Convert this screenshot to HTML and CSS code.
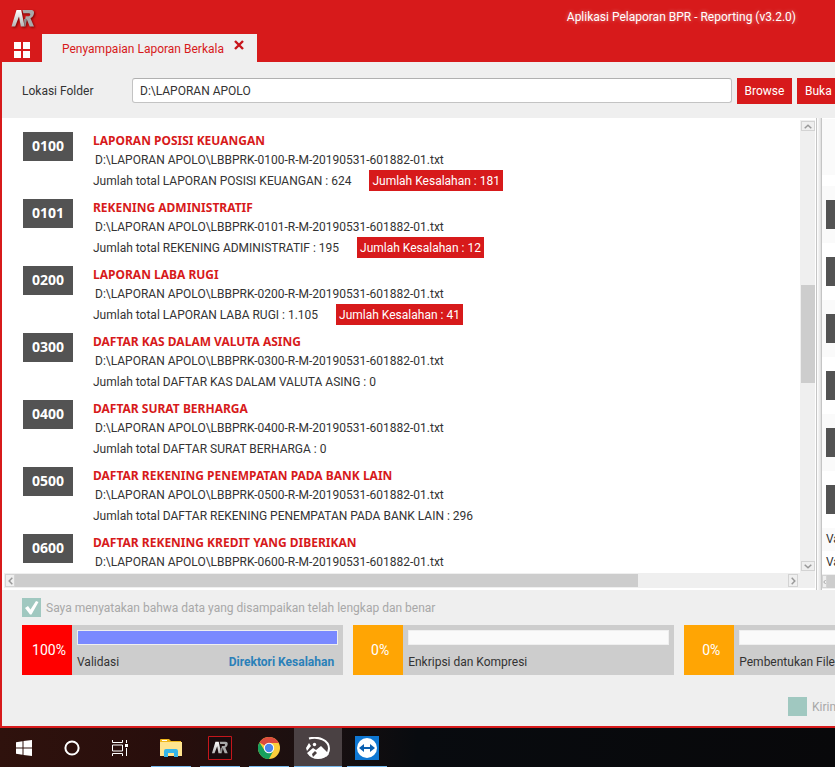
FILE: index.html
```html
<!DOCTYPE html>
<html lang="id">
<head>
<meta charset="utf-8">
<meta name="viewport" content="width=device-width, initial-scale=1">
<title>Aplikasi Pelaporan BPR - Reporting (v3.2.0)</title>
<link rel="stylesheet" href="styles.css">
</head>
<body>
<svg width="0" height="0" class="defs" aria-hidden="true">
  <defs>
    <linearGradient id="metal" x1="0" y1="0" x2="0" y2="1"><stop offset="0" stop-color="#fff"/><stop offset="1" stop-color="#b5b5b5"/></linearGradient>
    <symbol id="ar" viewBox="0 0 24 20">
      <path d="M.5 17.500 5.500 1h4.700l3.400 16.500H9.800L8 7.500 4.200 17.500z" fill="url(#metal)"/>
      <path d="M11.500 1h8c3.600 0 4 2 3.200 4.600-.5 1.900-1.600 3-3.200 3.600l3.500 8.300h-4.300L15.700 10h-1.500l.5-2.700h3c1.800 0 2.200-3 .4-3h-5.800z" fill="#a9a9a9"/>
      <path d="M13 10h3l-1.500 7.500h-1z" fill="#8b8b8b"/>
    </symbol>
    <symbol id="up" viewBox="0 0 8 5"><path d="M.7 4.300 4 1.200l3.300 3.100" fill="none" stroke="#999" stroke-width="1.500"/></symbol>
    <symbol id="down" viewBox="0 0 8 5"><path d="M.7.7 4 3.800 7.300.7" fill="none" stroke="#999" stroke-width="1.500"/></symbol>
    <symbol id="left" viewBox="0 0 5 8"><path d="M4.300.7 1.200 4l3.100 3.300" fill="none" stroke="#999" stroke-width="1.500"/></symbol>
    <symbol id="right" viewBox="0 0 5 8"><path d="M.7.7 3.800 4 .7 7.300" fill="none" stroke="#999" stroke-width="1.500"/></symbol>
  </defs>
</svg>
<div class="app">
  <header class="titlebar">
    <svg class="logo" width="24" height="20" aria-hidden="true"><use href="#ar"/></svg>
    <h1>Aplikasi Pelaporan BPR - Reporting (v3.2.0)</h1>
  </header>
  <nav class="tabs">
    <button class="menu" aria-label="Menu"><svg width="16" height="16" viewBox="0 0 16 16"><path d="M0 0h7v7H0zM9 0h7v7H9zM0 9h7v7H0zM9 9h7v7H9z" fill="#fff"/></svg></button>
    <div class="tab">
      <a href="#berkala">Penyampaian Laporan Berkala</a>
      <button class="close" aria-label="Tutup"><svg width="12" height="12" viewBox="0 0 12 12"><path d="m2 2 8 8M10 2l-8 8" stroke="#c8141a" stroke-width="2.400"/></svg></button>
    </div>
  </nav>
  <div class="folder">
    <label for="folder">Lokasi Folder</label>
    <input id="folder" type="text" value="D:\LAPORAN APOLO">
    <button class="action">Browse</button>
    <button class="action cut">Buka</button>
  </div>
  <main class="split" id="berkala">
    <section class="reports">
      <ul class="list">
        <li><b class="code">0100</b><div><h2>LAPORAN POSISI KEUANGAN</h2><p class="path">D:\LAPORAN APOLO\LBBPRK-0100-R-M-20190531-601882-01.txt</p><p class="total">Jumlah total LAPORAN POSISI KEUANGAN : 624 <span class="errors">Jumlah Kesalahan : 181</span></p></div></li>
        <li><b class="code">0101</b><div><h2>REKENING ADMINISTRATIF</h2><p class="path">D:\LAPORAN APOLO\LBBPRK-0101-R-M-20190531-601882-01.txt</p><p class="total">Jumlah total REKENING ADMINISTRATIF : 195 <span class="errors">Jumlah Kesalahan : 12</span></p></div></li>
        <li><b class="code">0200</b><div><h2>LAPORAN LABA RUGI</h2><p class="path">D:\LAPORAN APOLO\LBBPRK-0200-R-M-20190531-601882-01.txt</p><p class="total">Jumlah total LAPORAN LABA RUGI : 1.105 <span class="errors">Jumlah Kesalahan : 41</span></p></div></li>
        <li><b class="code">0300</b><div><h2>DAFTAR KAS DALAM VALUTA ASING</h2><p class="path">D:\LAPORAN APOLO\LBBPRK-0300-R-M-20190531-601882-01.txt</p><p class="total">Jumlah total DAFTAR KAS DALAM VALUTA ASING : 0</p></div></li>
        <li><b class="code">0400</b><div><h2>DAFTAR SURAT BERHARGA</h2><p class="path">D:\LAPORAN APOLO\LBBPRK-0400-R-M-20190531-601882-01.txt</p><p class="total">Jumlah total DAFTAR SURAT BERHARGA : 0</p></div></li>
        <li><b class="code">0500</b><div><h2>DAFTAR REKENING PENEMPATAN PADA BANK LAIN</h2><p class="path">D:\LAPORAN APOLO\LBBPRK-0500-R-M-20190531-601882-01.txt</p><p class="total">Jumlah total DAFTAR REKENING PENEMPATAN PADA BANK LAIN : 296</p></div></li>
        <li><b class="code">0600</b><div><h2>DAFTAR REKENING KREDIT YANG DIBERIKAN</h2><p class="path">D:\LAPORAN APOLO\LBBPRK-0600-R-M-20190531-601882-01.txt</p></div></li>
      </ul>
      <div class="vbar">
        <button aria-label="Gulir ke atas"><svg width="8" height="5"><use href="#up"/></svg></button>
        <div class="track"><div class="thumb"></div></div>
        <button aria-label="Gulir ke bawah"><svg width="8" height="5"><use href="#down"/></svg></button>
      </div>
      <div class="hbar">
        <button aria-label="Gulir ke kiri"><svg width="5" height="8"><use href="#left"/></svg></button>
        <div class="track"><div class="thumb"></div></div>
        <button aria-label="Gulir ke kanan"><svg width="5" height="8"><use href="#right"/></svg></button>
      </div>
      <div class="corner"></div>
    </section>
    <div class="divider"></div>
    <aside class="side">
      <div class="blank"></div>
      <ul>
        <li><i></i></li><li><i></i></li><li><i></i></li><li><i></i></li><li><i></i></li><li><i></i></li>
      </ul>
      <p class="shade">Va</p>
      <p>Va</p>
      <div class="hbar"><button aria-label="Gulir panel ke kiri"><svg width="5" height="8"><use href="#left"/></svg></button><div class="thumb"></div></div>
    </aside>
  </main>
  <footer class="process">
    <div class="check">
      <input id="agree" type="checkbox" checked disabled>
      <svg class="tick" width="19" height="19" viewBox="0 0 19 19" aria-hidden="true"><path d="m3 10 3-2 2.500 3.500L14 3l2.500 1-7 12.500H8z" fill="#fff"/></svg>
      <label for="agree">Saya menyatakan bahwa data yang disampaikan telah lengkap dan benar</label>
    </div>
    <div class="jobs">
      <section class="job failed"><span class="percent">100%</span><div class="detail"><div class="bar"><div style="width:100%"></div></div><p>Validasi <a href="#kesalahan">Direktori Kesalahan</a></p></div></section>
      <section class="job"><span class="percent">0%</span><div class="detail"><div class="bar"><div style="width:0%"></div></div><p>Enkripsi dan Kompresi</p></div></section>
      <section class="job"><span class="percent">0%</span><div class="detail"><div class="bar"><div style="width:0%"></div></div><p>Pembentukan File</p></div></section>
    </div>
    <div class="check send">
      <input id="send" type="checkbox" disabled>
      <label for="send">Kirim</label>
    </div>
  </footer>
</div>
<nav class="taskbar">
  <button aria-label="Start"><svg width="16" height="16" viewBox="0 0 16 16"><path d="M0 2.200 6.500 1.300v6.200H0zM7.500 1.100 16 0v7.500H7.500zM0 8.500h6.500v6.200L0 13.800zM7.500 8.500H16V16l-8.500-1.100z" fill="#fff"/></svg></button>
  <button aria-label="Cortana"><svg width="16" height="16" viewBox="0 0 16 16"><circle cx="8" cy="8" r="6.600" fill="none" stroke="#fff" stroke-width="2"/></svg></button>
  <button aria-label="Task View"><svg width="16" height="16" viewBox="0 0 16 16"><path d="M.5 0v2.500h10V0M.5 5h10v6H.5zM.5 16v-2.500h10V16M14.500 0v3M14.500 8v8" fill="none" stroke="#fff"/><path d="M13 4h3v3h-3z" fill="#fff"/></svg></button>
  <button class="open" aria-label="File Explorer"><svg width="22" height="18" viewBox="0 0 22 18"><path d="M0 1q0-1 1-1h8l2 2h10v4H0z" fill="#f0b71c"/><path d="M2 1h5v1H2z" fill="#fff"/><path d="M0 3h22v14H0z" fill="#ffe48f"/><path d="M4 18v-6q0-2 2-2h10q2 0 2 2v6h-4v-4H8v4z" fill="#35b5e9"/></svg></button>
  <button class="open" aria-label="Reporting"><svg width="24" height="24" viewBox="0 0 24 24"><path d="M.5.5h23v23H.5z" fill="#190c0e" stroke="#c5161b"/><use href="#ar" x="3" y="5" width="18" height="14"/></svg></button>
  <button class="open" aria-label="Chrome"><svg width="22" height="22" viewBox="0 0 22 22"><circle cx="11" cy="11" r="11" fill="#fbcf3c"/><path d="M11 11 1.470 5.500A11 11 0 0 1 20.530 5.500L20.800 6H11z" fill="#dc4b3e"/><path d="M1.470 5.500A11 11 0 0 0 11 22l4.500-8.500L11 11l-4.300 2.500z" fill="#17a05d"/><circle cx="11" cy="11" r="5.200" fill="#fff"/><circle cx="11" cy="11" r="4.200" fill="#4a86ee"/></svg></button>
  <button class="open active" aria-label="Foto"><svg width="24" height="22" viewBox="0 0 24 22"><path d="M3 1.500C12-1 23 3 23 11.500c0 3-1.500 5.500-3.500 7.500" fill="none" stroke="#fff" stroke-width="2"/><path d="M0 11 3 6l2 3-4 5zM1 16l6-5 3 2 5-4 8 8q-4 5-11 5T1 16z" fill="#fff"/><path d="m6 17 3-3 2 2-4 4z" fill="#4a4040"/><circle cx="8.500" cy="7.500" r="1.700" fill="#fff"/></svg></button>
  <button class="open" aria-label="TeamViewer"><svg width="24" height="24" viewBox="0 0 24 24"><path d="M0 0h24v24H0z" fill="#0e77d2"/><circle cx="12" cy="12" r="10" fill="#fff"/><path d="m4 12 5-4v3h6V8l5 4-5 4v-3H9v3z" fill="#0a5fb0"/></svg></button>
</nav>
</body>
</html>
```
FILE: styles.css
```css
* { box-sizing: border-box; }
body {
  margin: 0;
  min-height: 100vh;
  display: flex;
  flex-direction: column;
  overflow: hidden;
  font: 12px/20px "Segoe UI", Roboto, "Open Sans", sans-serif;
  color: #333;
  background: #efefef;
}
h1, h2, p, ul { margin: 0; padding: 0; font-size: 12px; }
ul { list-style: none; }
button { margin: 0; padding: 0; border: 0; background: none; font: inherit; }
svg { display: block; }
a { text-decoration: none; }
.defs { position: absolute; }

.app {
  flex: 1;
  display: flex;
  flex-direction: column;
  border-left: 2px solid #d71a1b;
  border-bottom: 2px solid #d71a1b;
}
.titlebar {
  height: 34px;
  display: flex;
  align-items: center;
  justify-content: space-between;
  padding: 4px 39px 0 9px;
  background: #d71a1b;
  color: #fff;
}
.titlebar h1 { font-weight: 400; line-height: 26px; padding-bottom: 4px; text-shadow: 0 0 4px #ffffff80; }
.logo { filter: drop-shadow(1px 1px 1px #700); }
.tabs { display: flex; background: #d71a1b; height: 28px; }
.menu { width: 40px; padding: 4px 12px 0; }
.tab { display: flex; gap: 9px; padding: 0 12px 0 20px; background: #efefef; }
.tab a { color: #d71a1b; line-height: 30px; }
.close { align-self: flex-start; padding-top: 5px; }

.folder { display: flex; gap: 5px; padding: 16px 0 14px 20px; background: #efefef; }
.folder label { width: 105px; line-height: 26px; }
.folder input {
  flex: 1;
  min-width: 0;
  height: 25px;
  padding: 0 7px;
  border: 1px solid #c3c3c3;
  border-top-color: #b0b0b0;
  border-radius: 3px;
  font: inherit;
  color: #333;
  background: #fff;
}
.action { width: 55px; height: 26px; background: #d71a1b; color: #fff; }
.cut { width: 38px; padding-left: 8px; text-align: left; }

.split { flex: 1; display: flex; background: #fff; min-height: 0; }
.reports {
  flex: 1;
  min-width: 0;
  display: grid;
  grid-template-columns: 1fr 15px;
  grid-template-rows: 1fr 15px;
  padding: 2px 1px 2px 2px;
}
.list { height: 453px; padding: 12px 19px 0; overflow: hidden; }
.list li { display: flex; gap: 20px; height: 67px; }
.code {
  width: 50px;
  height: 29px;
  background: #535353;
  color: #fff;
  font-family: "Segoe UI", "Open Sans", sans-serif;
  font-size: 14px;
  line-height: 28px;
  text-align: center;
}
.list h2 { color: #d71a1b; font-family: "Segoe UI", "Noto Sans", sans-serif; line-height: 18px; }
.path { padding-left: 2px; }
.total { display: flex; gap: 18px; height: 21px; line-height: 22px; }
.errors { padding: 0 3px; background: #d71a1b; color: #fff; }

.vbar, .hbar { display: flex; background: #efefef; padding: 1px 0 1px 1px; }
.vbar { flex-direction: column; padding-bottom: 2px; }
.hbar { padding-right: 2px; }
.vbar button, .hbar button {
  display: flex;
  align-items: center;
  justify-content: center;
  border: 1px solid #d3d3d3;
}
.vbar button { height: 10px; }
.hbar button { width: 10px; flex: none; }
.track { flex: 1; }
.thumb { background: #cdcdcd; }
.vbar .track { padding-top: 154px; }
.vbar .thumb { height: 98px; }
.hbar .thumb { width: 80.6%; height: 100%; }
.corner { background: #efefef; }
.divider {
  width: 6px;
  border: solid #c5c5c5;
  border-width: 0 1px;
  background: linear-gradient(90deg, #fff, #dedede);
}
.side { width: 13px; overflow: hidden; display: flex; flex-direction: column; padding: 1px 0; }
.blank { height: 56px; margin-bottom: 11px; background: #fafafa; }
.side li { height: 57px; padding: 14px 0 0 4px; }
.side li:nth-child(odd), .shade { background: #fafafa; }
.side i { display: block; height: 29px; background: #535353; }
.side p { padding-left: 4px; line-height: 23px; }
.side .hbar { height: 15px; padding-left: 0; padding-right: 0; }
.side .hbar button { width: 5px; }

.process { height: 136px; padding: 8px 0 0 20px; background: #efefef; overflow: hidden; }
.check { position: relative; display: flex; gap: 5px; color: #a8a8a8; height: 19px; }
.check input { appearance: none; flex: none; width: 19px; height: 19px; margin: 0; background: #a0c8c0; }
.tick { position: absolute; left: 0; top: 0; }
.check label { line-height: 20px; white-space: nowrap; }
.jobs { display: flex; gap: 10px; margin: 8px 0 22px; }
.job { flex: 0 0 39.5%; display: flex; height: 50px; background: #cdcdcd; }
.percent { width: 50px; padding-left: 4px; background: #ffa504; color: #fff; font-size: 14px; line-height: 50px; text-align: center; }
.failed .percent { background: #f00; }
.detail { flex: 1; padding: 5px 5px 0; }
.bar { height: 15px; border: 1px solid #efefef; background: #fafafa; }
.bar div { height: 100%; background: #7a89ff; }
.detail p { display: flex; justify-content: space-between; padding: 7px 4px 0 0; }
.detail a { color: #2a80b9; font-weight: 700; }
.send { justify-content: flex-end; }
.send label { width: 23px; overflow: hidden; }

.taskbar { display: flex; height: 39px; background: linear-gradient(90deg, #2f120d, #280e0c 20%, #1a1010 38%, #080b0f 50%, #08080a); }
.taskbar button { width: 48px; display: flex; align-items: center; justify-content: center; position: relative; }
.open { margin-left: 1px; }
.taskbar .open:nth-child(4) { margin-left: 3px; }
.open::after { content: ""; position: absolute; left: 4px; right: 4px; bottom: 0; height: 1px; background: #76b9ed; }
.active { background: #4a4143; }
.active::after { left: 0; right: 0; }
```
